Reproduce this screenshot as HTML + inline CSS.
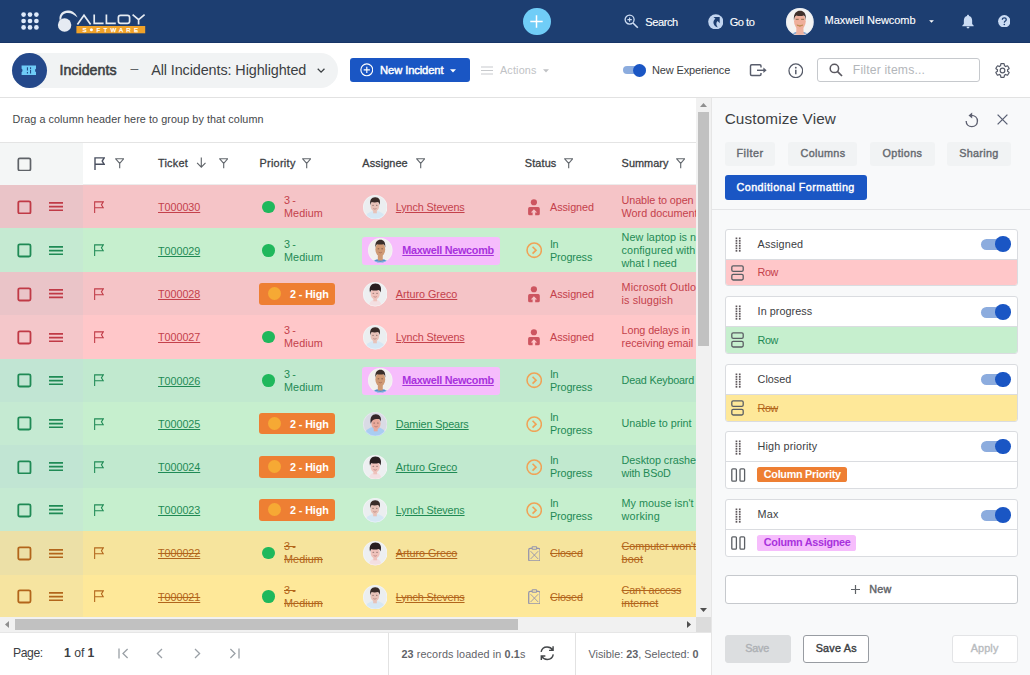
<!DOCTYPE html>
<html><head><meta charset="utf-8"><title>Incidents</title>
<style>
*{box-sizing:border-box;margin:0;padding:0}
html,body{width:1030px;height:675px;overflow:hidden;background:#fff;font-family:"Liberation Sans",sans-serif;font-size:10.8px;color:#3c4043}
.ab{position:absolute;display:block}
#nav{position:absolute;left:0;top:0;width:1030px;height:43px;background:#1d3e71;border-bottom:1.5px solid #173567}
#tbline{position:absolute;left:0;top:97px;width:1030px;height:1px;background:#e2e2e2}
#pill{position:absolute;left:12px;top:53px;width:326px;height:35px;border-radius:17.5px;background:#f1f3f4}
#pillc{position:absolute;left:12px;top:53px;width:34.6px;height:35px;border-radius:50%;background:#24488a}
#grp{position:absolute;left:0;top:98px;width:696px;height:44px;background:#fff}
#hdr{position:absolute;left:0;top:142px;width:696px;height:43px;background:#fff;border-top:1px solid #e4e4e4}
#hdr .fix{position:absolute;left:0;top:0;width:83px;height:43px;background:#f4f6f6}
#hdr::after{content:"";position:absolute;left:83px;top:41.4px;width:614px;height:1px;background:#ececec}
#grid{position:absolute;left:0;top:0;width:696px;height:617.3px;overflow:hidden}
.row{position:absolute;left:0;width:697px;height:43.4px;overflow:hidden}
.row .fix{position:absolute;left:0;top:0;width:83px;height:45px}
.cb{position:absolute;left:17.8px;width:14.4px;height:14.4px;border:1.8px solid #5f6368;border-radius:2.6px}
.dot{position:absolute;width:13px;height:13px;border-radius:50%}
.hi{position:absolute;left:259.2px;width:75.6px;height:21.8px;border-radius:3px;background:#ee7f33;color:#fff}
.mx{position:absolute;left:362.3px;width:137.8px;height:27.8px;border-radius:3px;background:#f6bdfc}
#vs{position:absolute;left:696px;top:98px;width:15px;height:519.3px;background:#f1f1f1}
#vs .th{position:absolute;left:2px;top:14.4px;width:11px;height:233.5px;background:#c1c1c1}
#hs{position:absolute;left:0;top:617.3px;width:696px;height:15.2px;background:#f1f1f1}
#hs .th{position:absolute;left:14.6px;top:2px;width:503.4px;height:11px;background:#c1c1c1}
#corner{position:absolute;left:696px;top:617.3px;width:15px;height:15.2px;background:#dcdcdc}
#pg{position:absolute;left:0;top:632px;width:711px;height:43px;background:#fff;border-top:1px solid #e6e6e6}
#pg b{font-weight:700}
#pn{position:absolute;left:711px;top:98px;width:319px;height:577px;background:#f8f9fa;border-left:1px solid #e6e6e6}
.card{position:absolute;left:12.6px;width:293.3px;height:57.4px;border:1px solid #dadce0;border-radius:3px;background:#fff;overflow:hidden}
.card .bot{position:absolute;left:0;top:29px;width:292px;height:29px;border-top:1px solid #dadce0}
.tg{position:absolute;width:23px;height:8px;border-radius:4px;background:#8cacde}
.tg i{position:absolute;right:0;top:-2px;width:12.9px;height:12.9px;border-radius:50%;background:#1a56c4;display:block}
.tg2{position:absolute;width:28px;height:11px;border-radius:5.5px;background:#8cacde}
.tg2 i{position:absolute;right:-1.2px;top:-2.6px;width:15.6px;height:15.6px;border-radius:50%;background:#1a56c4;display:block}
.chip{position:absolute;left:31.4px;top:4.6px;height:15.6px;border-radius:2.6px}
</style></head>
<body>
<div id="nav">
<svg class="ab" style="left:20.6px;top:11.7px" width="18" height="18" viewBox="0 0 18 18" fill="#dfeafa"><circle cx="2.6" cy="2.6" r="2.35"/><circle cx="9" cy="2.6" r="2.35"/><circle cx="15.4" cy="2.6" r="2.35"/><circle cx="2.6" cy="9" r="2.35"/><circle cx="9" cy="9" r="2.35"/><circle cx="15.4" cy="9" r="2.35"/><circle cx="2.6" cy="15.4" r="2.35"/><circle cx="9" cy="15.4" r="2.35"/><circle cx="15.4" cy="15.4" r="2.35"/></svg>
<svg class="ab" style="left:57px;top:9px" width="90" height="26" viewBox="0 0 90 26">
    <circle cx="7.6" cy="16" r="6.7" fill="#e6ebf2"/>
    <path d="M2.6 11 C1.6 4.6 6.6 0.8 12 1.6 C16.4 2.2 19 5 20.6 8.6 C17.4 5.4 14.4 4 11 3.9 C6.8 3.8 4.2 6.4 4.4 10.4 Z" fill="#e6ebf2"/>
    <rect x="19.4" y="17" width="68.8" height="7.3" fill="#f0a229"/>
    <g fill="none" stroke="#e6ebf2" stroke-width="1.7">
      <path d="M20.4 15.4 L27 6.2 L33.6 15.4"/>
      <path d="M37.2 5.4 V14.4 H46.6"/>
      <path d="M49.4 5.4 V14.4 H58.8"/>
      <rect x="61.4" y="6.3" width="11.2" height="8.1" rx="2.2"/>
      <path d="M75.6 5.6 L81.6 10.6 L87.6 5.6 M81.6 10.6 V15.4"/>
    </g>
    <text x="25.6" y="22.9" stroke="#fff" stroke-width="0.25" font-family="Liberation Sans, sans-serif" font-size="6" font-weight="400" fill="#fff" letter-spacing="3.2">S</text>
    <circle cx="34.4" cy="20.7" r="1.5" fill="#fff"/>
    <text x="39.6" y="22.9" font-family="Liberation Sans, sans-serif" font-size="6" font-weight="400" fill="#fff" letter-spacing="3.25" stroke="#fff" stroke-width="0.25">FTWARE</text>
  </svg>
<div class="ab" style="left:522.8px;top:7.6px;width:27.8px;height:27.8px;border-radius:50%;background:#70cdf7"></div>
<svg class="ab" style="left:530.2px;top:15px" width="13" height="13" viewBox="0 0 13 13"><path d="M6.5 0.3V12.7M0.3 6.5H12.7" stroke="#fff" stroke-width="1.5"/></svg>
<svg class="ab" style="left:624px;top:14.3px" width="15" height="15" viewBox="0 0 15 15"><circle cx="5.6" cy="5.6" r="4.5" fill="none" stroke="#cfdef4" stroke-width="1.3"/><path d="M9 9 L13.8 13.8" stroke="#cfdef4" stroke-width="1.6"/><path d="M5.6 3.4V7.8M3.4 5.6H7.8" stroke="#cfdef4" stroke-width="1.1"/></svg>
<span class="ab" style="left:645.3px;top:14.70px;font-size:11.1px;line-height:14px;white-space:nowrap;color:#fff;letter-spacing:-0.454px;-webkit-text-stroke:0.12px #fff;">Search</span>
<svg class="ab" style="left:707.6px;top:13.6px" width="15.6" height="15.6" viewBox="0 0 16 16"><circle cx="8" cy="8" r="7.8" fill="#c2d5f0"/><path d="M5.6 3 H12 V9.4 L9.9 7.3 C8 9 8.2 11.4 10 13.8 C5.4 12.6 4 7.8 7.6 5 Z" fill="#1d3e71"/></svg>
<span class="ab" style="left:729.7px;top:14.70px;font-size:11.1px;line-height:14px;white-space:nowrap;color:#fff;letter-spacing:-0.487px;-webkit-text-stroke:0.12px #fff;">Go to</span>
<svg class="ab" style="left:786.1px;top:7.5px" width="27.8" height="27.8" viewBox="0 0 28 28">
    <defs><clipPath id="cn"><circle cx="14" cy="14" r="14"/></clipPath></defs>
    <g clip-path="url(#cn)"><rect width="28" height="28" fill="#f4f3f2"/>
    <ellipse cx="14" cy="31" rx="11" ry="7.4" fill="#7ea6d4"/>
    <path d="M10.4 18 H17.6 V24 C17.6 26 19 26.6 20.4 27 L14 29 L7.6 27 C9 26.6 10.4 26 10.4 24 Z" fill="#eeb3a0"/>
    <ellipse cx="14" cy="13.6" rx="5.9" ry="7.7" fill="#efaf9b"/>
    <path d="M8 12.6 C7.2 5 11 2.7 14.1 2.8 C17.4 2.7 20.8 5 20 12.6 C19.7 9.4 19 8.2 17.8 7.6 C15.4 8.4 12.4 8.3 10.4 7.6 C9 8.4 8.4 9.8 8 12.6Z" fill="#3f302b"/>
    <path d="M9.8 11.4 H12.8 M15.2 11.4 H18.2" stroke="#6a5a3a" stroke-width="1" stroke-opacity="0.75"/>
    <path d="M11 17.2 Q14 19.8 17 17.2 Q14 18.4 11 17.2 Z" fill="#b98a4a" stroke="#b98a4a" stroke-width="0.9" stroke-opacity="0.8"/>
    </g><circle cx="14" cy="14" r="13.6" fill="none" stroke="#dfe8f5" stroke-opacity="0.7" stroke-width="0.7"/>
  </svg>
<span class="ab" style="left:824.6px;top:12.90px;font-size:11.0px;line-height:14px;white-space:nowrap;color:#fff;letter-spacing:-0.049px;-webkit-text-stroke:0.12px #fff;">Maxwell Newcomb</span>
<svg class="ab" style="left:929px;top:20.4px" width="5" height="3.2" viewBox="0 0 6 4"><path d="M0 0.2H6L3 3.4Z" fill="#fff"/></svg>
<svg class="ab" style="left:962px;top:13.8px" width="12" height="15.4" viewBox="0 0 13 16" fill="#cbdcf4"><path d="M6.5 0.6 C7.2 0.6 7.6 1.1 7.6 1.8 C9.8 2.4 11 4.2 11 6.6 V10.4 L12.6 12 V12.8 H0.4 V12 L2 10.4 V6.6 C2 4.2 3.2 2.4 5.4 1.8 C5.4 1.1 5.8 0.6 6.5 0.6Z"/><path d="M5 13.6 H8 C8 14.6 7.4 15.3 6.5 15.3 C5.6 15.3 5 14.6 5 13.6Z"/></svg>
<svg class="ab" style="left:997.6px;top:14.8px" width="12.6" height="12.6" viewBox="0 0 13 13"><circle cx="6.5" cy="6.5" r="6.4" fill="#cbdcf4"/><path d="M4.5 5 C4.5 3.6 5.4 2.9 6.5 2.9 C7.7 2.9 8.5 3.7 8.5 4.8 C8.5 6.2 6.6 6.3 6.5 7.9" fill="none" stroke="#1d3e71" stroke-width="1.3"/><circle cx="6.5" cy="9.8" r="0.85" fill="#1d3e71"/></svg>
</div>
<div id="tbline"></div><div id="pill"></div><div id="pillc"></div>
<svg class="ab" style="left:21.2px;top:64.6px" width="15.6" height="10.8" viewBox="0 0 16 11"><path d="M0.6 0.4 H15.4 V3.8 C14.2 4 14.2 7 15.4 7.2 V10.6 H0.6 V7.2 C1.8 7 1.8 4 0.6 3.8 Z" fill="#6ecbf7"/><path d="M6.6 2.2 V5.6 M6.6 7.2 V8.6 M9.8 2.2 V4.2 M9.8 5.2 V8.6" stroke="#24488a" stroke-width="1.1"/></svg>
<span class="ab" style="left:59.4px;top:60.90px;font-size:14.2px;line-height:18px;white-space:nowrap;color:#3c4043;letter-spacing:0.046px;-webkit-text-stroke:0.55px #3c4043;">Incidents</span>
<span class="ab" style="left:130.4px;top:59.30px;font-size:14px;line-height:18px;white-space:nowrap;color:#5f6368;">–</span>
<span class="ab" style="left:151.2px;top:60.90px;font-size:14.4px;line-height:18px;white-space:nowrap;color:#3c4043;letter-spacing:-0.096px;">All Incidents: Highlighted</span>
<svg class="ab" style="left:317px;top:68px" width="8.2" height="5.5" viewBox="0 0 9 6"><path d="M0.8 0.8 L4.5 4.6 L8.2 0.8" fill="none" stroke="#3c4043" stroke-width="1.4"/></svg>
<div class="ab" style="left:350.2px;top:57.6px;width:119.8px;height:24.9px;border-radius:3px;background:#1a56c4"></div>
<svg class="ab" style="left:359.8px;top:63.1px" width="13.6" height="13.6" viewBox="0 0 14 14"><circle cx="7" cy="7" r="6.1" fill="none" stroke="#fff" stroke-width="1.2"/><path d="M7 3.8V10.2M3.8 7H10.2" stroke="#fff" stroke-width="1.2"/></svg>
<span class="ab" style="left:380.1px;top:62.90px;font-size:11.2px;line-height:14px;white-space:nowrap;color:#fff;letter-spacing:-0.113px;-webkit-text-stroke:0.45px #fff;">New Incident</span>
<svg class="ab" style="left:450.2px;top:68.6px" width="6" height="4" viewBox="0 0 6 4"><path d="M0 0.2H6L3 3.4Z" fill="#fff"/></svg>
<svg class="ab" style="left:481.2px;top:65.6px" width="12" height="9" viewBox="0 0 12 9"><path d="M0 1H12M0 4.5H12M0 8H12" stroke="#c8cacd" stroke-width="1.2"/></svg>
<span class="ab" style="left:500px;top:62.90px;font-size:10.8px;line-height:14px;white-space:nowrap;color:#c0c2c5;letter-spacing:0.164px;">Actions</span>
<svg class="ab" style="left:542.6px;top:68.6px" width="6" height="4" viewBox="0 0 6 4"><path d="M0 0.2H6L3 3.4Z" fill="#c0c2c5"/></svg>
<div class="tg" style="left:622.9px;top:66px"><i></i></div>
<span class="ab" style="left:652px;top:62.90px;font-size:11.0px;line-height:14px;white-space:nowrap;color:#3c4043;letter-spacing:-0.138px;">New Experience</span>
<svg class="ab" style="left:748.8px;top:63px" width="19" height="14" viewBox="0 0 19 14"><path d="M12 4.5 V2.9 C12 2.2 11.5 1.7 10.8 1.7 H2.7 C2 1.7 1.5 2.2 1.5 2.9 V11.3 C1.5 12 2 12.5 2.7 12.5 H10.8 C11.5 12.5 12 12 12 11.3 V9.9" fill="none" stroke="#585d6c" stroke-width="1.45"/><path d="M8 7.3 H15" fill="none" stroke="#585d6c" stroke-width="1.45"/><path d="M14.4 4.5 L17.6 7.3 L14.4 10.1 Z" fill="#585d6c"/></svg>
<svg class="ab" style="left:787.7px;top:62.6px" width="15.6" height="15.6" viewBox="0 0 16 16"><circle cx="8" cy="8" r="7" fill="none" stroke="#555a68" stroke-width="1.3"/><path d="M8 7V11.6" stroke="#555a68" stroke-width="1.5"/><circle cx="8" cy="4.8" r="0.95" fill="#555a68"/></svg>
<div class="ab" style="left:817.2px;top:58.4px;width:163px;height:24px;border:1px solid #c6c9cd;border-radius:3px;background:#fff"></div>
<svg class="ab" style="left:829.2px;top:63px" width="14" height="14" viewBox="0 0 14 14"><circle cx="5.4" cy="5.4" r="4.2" fill="none" stroke="#5a5860" stroke-width="1.5"/><path d="M8.6 8.6 L13 13" stroke="#5a5860" stroke-width="1.7"/></svg>
<span class="ab" style="left:852.8px;top:62.30px;font-size:12.2px;line-height:16px;white-space:nowrap;color:#b3b6ba;letter-spacing:0.170px;">Filter items...</span>
<svg class="ab" style="left:994.2px;top:61.8px" width="17" height="17" viewBox="0 0 24 24"><path d="M19.14 12.94c.04-.3.06-.61.06-.94 0-.32-.02-.64-.07-.94l2.03-1.58a.49.49 0 0 0 .12-.61l-1.92-3.32a.488.488 0 0 0-.59-.22l-2.39.96c-.5-.38-1.03-.7-1.62-.94l-.36-2.54a.484.484 0 0 0-.48-.41h-3.84c-.24 0-.43.17-.47.41l-.36 2.54c-.59.24-1.13.57-1.62.94l-2.39-.96c-.22-.08-.47 0-.59.22L2.74 8.87c-.12.21-.08.47.12.61l2.03 1.58c-.05.3-.09.63-.09.94s.02.64.07.94l-2.03 1.58a.49.49 0 0 0-.12.61l1.92 3.32c.12.22.37.29.59.22l2.39-.96c.5.38 1.03.7 1.62.94l.36 2.54c.05.24.24.41.48.41h3.84c.24 0 .44-.17.47-.41l.36-2.54c.59-.24 1.13-.56 1.62-.94l2.39.96c.22.08.47 0 .59-.22l1.92-3.32c.12-.22.07-.47-.12-.61l-2.01-1.58z" fill="none" stroke="#555a68" stroke-width="1.7"/><circle cx="12" cy="12" r="3.3" fill="none" stroke="#555a68" stroke-width="1.7"/></svg>
<div id="grp"><span class="ab" style="left:12.6px;top:14.10px;font-size:10.8px;line-height:14px;white-space:nowrap;color:#44474a;letter-spacing:0.076px;">Drag a column header here to group by that column</span></div>
<div id="hdr"><div class="fix"></div><svg class="ab" style="left:17.4px;top:13.5px" width="14.8" height="14.8" viewBox="0 0 14.8 14.8"><rect x="1.3" y="1.3" width="12.2" height="12.2" rx="1.5" fill="none" stroke="#5f6368" stroke-width="1.7"/></svg>
<svg class="ab" style="left:94px;top:14.4px" width="11.4" height="13" viewBox="0 0 11 13"><path d="M0.8 13 V0.9 H10 L8 4.1 L10 7.3 H0.8" fill="none" stroke="#4a5060" stroke-width="1.4"/></svg>
<svg class="ab" style="left:115px;top:15.4px" width="9.4" height="10.4" viewBox="0 0 9.4 10.4"><path d="M0.7 0.8 H8.7 L4.7 5.4 Z M4.7 5.4 V10.2" fill="none" stroke="#63686e" stroke-width="1.15" stroke-linejoin="round"/></svg>
<span class="ab" style="left:158px;top:12.70px;font-size:10.9px;line-height:14px;white-space:nowrap;color:#3c4043;letter-spacing:0.207px;-webkit-text-stroke:0.3px #3c4043;">Ticket</span>
<svg class="ab" style="left:196px;top:14.2px" width="10.6" height="11.2" viewBox="0 0 11 12"><path d="M5.5 0.5 V10.6 M1 6.4 L5.5 10.9 L10 6.4" fill="none" stroke="#5f6368" stroke-width="1.2"/></svg>
<svg class="ab" style="left:219px;top:15.4px" width="9.4" height="10.4" viewBox="0 0 9.4 10.4"><path d="M0.7 0.8 H8.7 L4.7 5.4 Z M4.7 5.4 V10.2" fill="none" stroke="#63686e" stroke-width="1.15" stroke-linejoin="round"/></svg>
<span class="ab" style="left:259.4px;top:12.70px;font-size:10.9px;line-height:14px;white-space:nowrap;color:#3c4043;letter-spacing:0.298px;-webkit-text-stroke:0.3px #3c4043;">Priority</span>
<svg class="ab" style="left:302px;top:15.4px" width="9.4" height="10.4" viewBox="0 0 9.4 10.4"><path d="M0.7 0.8 H8.7 L4.7 5.4 Z M4.7 5.4 V10.2" fill="none" stroke="#63686e" stroke-width="1.15" stroke-linejoin="round"/></svg>
<span class="ab" style="left:362.3px;top:12.70px;font-size:10.9px;line-height:14px;white-space:nowrap;color:#3c4043;letter-spacing:0.080px;-webkit-text-stroke:0.3px #3c4043;">Assignee</span>
<svg class="ab" style="left:415.6px;top:15.4px" width="9.4" height="10.4" viewBox="0 0 9.4 10.4"><path d="M0.7 0.8 H8.7 L4.7 5.4 Z M4.7 5.4 V10.2" fill="none" stroke="#63686e" stroke-width="1.15" stroke-linejoin="round"/></svg>
<span class="ab" style="left:524.8px;top:12.70px;font-size:10.9px;line-height:14px;white-space:nowrap;color:#3c4043;letter-spacing:0.120px;-webkit-text-stroke:0.3px #3c4043;">Status</span>
<svg class="ab" style="left:564px;top:15.4px" width="9.4" height="10.4" viewBox="0 0 9.4 10.4"><path d="M0.7 0.8 H8.7 L4.7 5.4 Z M4.7 5.4 V10.2" fill="none" stroke="#63686e" stroke-width="1.15" stroke-linejoin="round"/></svg>
<span class="ab" style="left:621.6px;top:12.70px;font-size:10.9px;line-height:14px;white-space:nowrap;color:#3c4043;letter-spacing:0.027px;-webkit-text-stroke:0.3px #3c4043;">Summary</span>
<svg class="ab" style="left:675.6px;top:15.4px" width="9.4" height="10.4" viewBox="0 0 9.4 10.4"><path d="M0.7 0.8 H8.7 L4.7 5.4 Z M4.7 5.4 V10.2" fill="none" stroke="#63686e" stroke-width="1.15" stroke-linejoin="round"/></svg>
</div>
<div id="grid">
<div class="row" style="top:185.0px;height:43.5px;background:#f5c4c7;color:#c4414b"><div class="fix" style="background:#eac4c8"></div><svg class="ab" style="left:17.2px;top:14.70px" width="14.8" height="14.8" viewBox="0 0 14.8 14.8"><rect x="1.3" y="1.3" width="12.2" height="12.2" rx="1.5" fill="none" stroke="#c03a46" stroke-width="1.8"/></svg><svg class="ab" style="left:48.6px;top:17.20px" width="14.3" height="9.2" viewBox="0 0 14.3 9.2"><path d="M0 0.9H14.3M0 4.6H14.3M0 8.3H14.3" stroke="#c03a46" stroke-width="1.7"/></svg><svg class="ab" style="left:93.8px;top:15.90px" width="10.2" height="12.2" viewBox="0 0 11 13"><path d="M0.7 13 V0.9 H10 L8 4.1 L10 7.3 H0.7" fill="none" stroke="#c03a46" stroke-width="1.15"/></svg><span class="ab" style="left:158px;top:15.05px;font-size:10.8px;line-height:14px;white-space:nowrap;letter-spacing:-0.056px;text-decoration:underline;">T000030</span><div class="dot" style="left:262.3px;top:15.50px;width:12.6px;height:12.6px;background:#1fb85c"></div><span class="ab" style="left:284px;top:9.05px;font-size:10.8px;line-height:13.0px;white-space:nowrap;"><span style="letter-spacing:-0.352px">3 -</span><br><span style="letter-spacing:0.077px">Medium</span></span><svg class="ab" style="left:362.50px;top:10.00px" width="24.4" height="24.4" viewBox="0 0 24 24"><defs><clipPath id="ca0"><circle cx="12" cy="12" r="12"/></clipPath></defs><g clip-path="url(#ca0)"><rect width="24" height="24" fill="#ebeef0"/><ellipse cx="12" cy="24.5" rx="10.5" ry="9" fill="#d6e7f4"/><rect x="10" y="14" width="3.6" height="4" fill="#e8c2b8"/><ellipse cx="11.7" cy="10.6" rx="4.3" ry="5.4" fill="#e8c2b8"/><ellipse cx="9.899999999999999" cy="10.0" rx="0.85" ry="0.5" fill="#3a2a2a" fill-opacity="0.55"/><ellipse cx="13.5" cy="10.0" rx="0.85" ry="0.5" fill="#3a2a2a" fill-opacity="0.55"/><path d="M10.1 13.3 Q11.7 14.5 13.299999999999999 13.3" fill="none" stroke="#7a3a3a" stroke-opacity="0.5" stroke-width="0.7"/><path d="M7.2 10 C6.2 5 8.4 2.2 12 2.3 C15.8 2.2 17.6 5 16.4 9.8 C16 8 15.4 7.2 14.6 6.9 C12.6 7.6 9.8 7.4 8.6 7 C7.8 7.8 7.5 8.8 7.2 10Z" fill="#3a2c29"/></g><circle cx="12" cy="12" r="11.7" fill="none" stroke="#fff" stroke-opacity="0.55" stroke-width="0.6"/></svg><span class="ab" style="left:395.8px;top:15.05px;font-size:10.8px;line-height:14px;white-space:nowrap;letter-spacing:-0.129px;text-decoration:underline;">Lynch Stevens</span><svg class="ab" style="left:527.9px;top:13.80px" width="12" height="17" viewBox="0 0 12 17"><circle cx="5.9" cy="3.25" r="3.1" fill="#cd5560"/><path d="M1.7 8.1 H10.2 A1.6 1.6 0 0 1 11.8 9.7 V14.7 A1.6 1.6 0 0 1 10.2 16.3 H7.2 V13.5 H9.1 L5.9 10.2 L2.8 13.5 H4.6 V16.3 H1.7 A1.6 1.6 0 0 1 0.1 14.7 V9.7 A1.6 1.6 0 0 1 1.7 8.1 Z" fill="#cd5560"/></svg><span class="ab" style="left:550px;top:15.05px;font-size:10.8px;line-height:14px;white-space:nowrap;letter-spacing:-0.061px;">Assigned</span><span class="ab" style="left:621.6px;top:9.05px;font-size:10.8px;line-height:13.0px;white-space:nowrap;"><span style="letter-spacing:-0.097px">Unable to open</span><br><span style="letter-spacing:-0.003px">Word document</span></span></div>
<div class="row" style="top:228.2px;height:44.3px;background:#c6efce;color:#1f8a55"><div class="fix" style="background:#c5ead2"></div><svg class="ab" style="left:17.2px;top:15.10px" width="14.8" height="14.8" viewBox="0 0 14.8 14.8"><rect x="1.3" y="1.3" width="12.2" height="12.2" rx="1.5" fill="none" stroke="#1f8a55" stroke-width="1.8"/></svg><svg class="ab" style="left:48.6px;top:17.60px" width="14.3" height="9.2" viewBox="0 0 14.3 9.2"><path d="M0 0.9H14.3M0 4.6H14.3M0 8.3H14.3" stroke="#1f8a55" stroke-width="1.7"/></svg><svg class="ab" style="left:93.8px;top:16.30px" width="10.2" height="12.2" viewBox="0 0 11 13"><path d="M0.7 13 V0.9 H10 L8 4.1 L10 7.3 H0.7" fill="none" stroke="#1f8a55" stroke-width="1.15"/></svg><span class="ab" style="left:158px;top:15.45px;font-size:10.8px;line-height:14px;white-space:nowrap;letter-spacing:-0.056px;text-decoration:underline;">T000029</span><div class="dot" style="left:262.3px;top:15.90px;width:12.6px;height:12.6px;background:#1fb85c"></div><span class="ab" style="left:284px;top:9.45px;font-size:10.8px;line-height:13.0px;white-space:nowrap;"><span style="letter-spacing:-0.352px">3 -</span><br><span style="letter-spacing:0.077px">Medium</span></span><div class="mx" style="top:8.60px"></div><svg class="ab" style="left:368.30px;top:10.20px" width="24.6" height="24.6" viewBox="0 0 24 24"><defs><clipPath id="cm1"><circle cx="12" cy="12" r="12"/></clipPath></defs><g clip-path="url(#cm1)"><rect width="24" height="24" fill="#f1f0ef"/><ellipse cx="12" cy="27.2" rx="10" ry="6.8" fill="#4f8fcf"/><rect x="9.6" y="15" width="4.8" height="7" fill="#cf9a74"/><ellipse cx="12" cy="11.2" rx="4.8" ry="6.6" fill="#cf9a74"/><ellipse cx="10.2" cy="10.6" rx="0.85" ry="0.5" fill="#3a2a2a" fill-opacity="0.55"/><ellipse cx="13.8" cy="10.6" rx="0.85" ry="0.5" fill="#3a2a2a" fill-opacity="0.55"/><path d="M10.4 13.899999999999999 Q12 15.1 13.6 13.899999999999999" fill="none" stroke="#7a3a3a" stroke-opacity="0.5" stroke-width="0.7"/><path d="M7.2 9.6 C6.6 3.6 9.6 1.7 12.1 1.8 C14.8 1.7 17.4 3.6 16.8 9.6 C16.5 7.2 16 6.4 15 6 C13 6.6 10.6 6.5 9 6 C8 6.6 7.5 7.4 7.2 9.6Z" fill="#3a2f2a"/></g><circle cx="12" cy="12" r="11.7" fill="none" stroke="#fff" stroke-opacity="0.55" stroke-width="0.6"/></svg><span class="ab" style="left:402.3px;top:14.55px;font-size:10.8px;line-height:14px;white-space:nowrap;font-weight:700;color:#a832dc;letter-spacing:-0.259px;text-decoration:underline;">Maxwell Newcomb</span><svg class="ab" style="left:525.6px;top:14.30px" width="16.4" height="16.4" viewBox="0 0 16 16"><circle cx="8" cy="8" r="7" fill="none" stroke="#f0a256" stroke-width="1.5"/><path d="M6.4 4.6 L9.8 8 L6.4 11.4" fill="none" stroke="#f0a256" stroke-width="1.6"/></svg><span class="ab" style="left:550px;top:9.45px;font-size:10.8px;line-height:13.0px;white-space:nowrap;"><span style="letter-spacing:-0.607px">In</span><br><span style="letter-spacing:-0.131px">Progress</span></span><span class="ab" style="left:621.6px;top:2.95px;font-size:10.8px;line-height:13.0px;white-space:nowrap;"><span style="letter-spacing:0.047px">New laptop is n</span><br><span style="letter-spacing:0.083px">configured with</span><br><span style="letter-spacing:-0.064px">what I need</span></span></div>
<div class="row" style="top:272.2px;height:43.5px;background:#f5c4c7;color:#c4414b"><div class="fix" style="background:#eac4c8"></div><svg class="ab" style="left:17.2px;top:14.70px" width="14.8" height="14.8" viewBox="0 0 14.8 14.8"><rect x="1.3" y="1.3" width="12.2" height="12.2" rx="1.5" fill="none" stroke="#c03a46" stroke-width="1.8"/></svg><svg class="ab" style="left:48.6px;top:17.20px" width="14.3" height="9.2" viewBox="0 0 14.3 9.2"><path d="M0 0.9H14.3M0 4.6H14.3M0 8.3H14.3" stroke="#c03a46" stroke-width="1.7"/></svg><svg class="ab" style="left:93.8px;top:15.90px" width="10.2" height="12.2" viewBox="0 0 11 13"><path d="M0.7 13 V0.9 H10 L8 4.1 L10 7.3 H0.7" fill="none" stroke="#c03a46" stroke-width="1.15"/></svg><span class="ab" style="left:158px;top:15.05px;font-size:10.8px;line-height:14px;white-space:nowrap;letter-spacing:-0.056px;text-decoration:underline;">T000028</span><div class="hi" style="top:10.90px"><div class="dot" style="left:9.2px;top:4.4px;width:12.9px;height:12.9px;background:#f6a934"></div><span class="ab" style="left:30.8px;top:4.00px;font-size:10.8px;line-height:14px;white-space:nowrap;font-weight:700;letter-spacing:-0.114px;">2 - High</span></div><svg class="ab" style="left:362.50px;top:10.00px" width="24.4" height="24.4" viewBox="0 0 24 24"><defs><clipPath id="ca2"><circle cx="12" cy="12" r="12"/></clipPath></defs><g clip-path="url(#ca2)"><rect width="24" height="24" fill="#edeff1"/><ellipse cx="12" cy="25.5" rx="6.6" ry="8.5" fill="#f3dfe2"/><rect x="10.2" y="15" width="3.6" height="4" fill="#efc2bb"/><ellipse cx="12" cy="11.6" rx="4.5" ry="5.6" fill="#efc2bb"/><ellipse cx="10.2" cy="11.0" rx="0.85" ry="0.5" fill="#3a2a2a" fill-opacity="0.55"/><ellipse cx="13.8" cy="11.0" rx="0.85" ry="0.5" fill="#3a2a2a" fill-opacity="0.55"/><path d="M10.4 14.3 Q12 15.5 13.6 14.3" fill="none" stroke="#7a3a3a" stroke-opacity="0.5" stroke-width="0.7"/><path d="M6.9 10.6 C5.4 4 8.6 1.4 12.2 1.5 C16.2 1.4 19 4.4 17.2 10.4 C16.8 8.6 16.2 8 15.4 7.8 C13 8.6 9.6 8.4 8.4 7.8 C7.6 8.4 7.2 9.4 6.9 10.6Z" fill="#291f21"/></g><circle cx="12" cy="12" r="11.7" fill="none" stroke="#fff" stroke-opacity="0.55" stroke-width="0.6"/></svg><span class="ab" style="left:395.8px;top:15.05px;font-size:10.8px;line-height:14px;white-space:nowrap;letter-spacing:-0.029px;text-decoration:underline;">Arturo Greco</span><svg class="ab" style="left:527.9px;top:13.80px" width="12" height="17" viewBox="0 0 12 17"><circle cx="5.9" cy="3.25" r="3.1" fill="#cd5560"/><path d="M1.7 8.1 H10.2 A1.6 1.6 0 0 1 11.8 9.7 V14.7 A1.6 1.6 0 0 1 10.2 16.3 H7.2 V13.5 H9.1 L5.9 10.2 L2.8 13.5 H4.6 V16.3 H1.7 A1.6 1.6 0 0 1 0.1 14.7 V9.7 A1.6 1.6 0 0 1 1.7 8.1 Z" fill="#cd5560"/></svg><span class="ab" style="left:550px;top:15.05px;font-size:10.8px;line-height:14px;white-space:nowrap;letter-spacing:-0.061px;">Assigned</span><span class="ab" style="left:621.6px;top:9.05px;font-size:10.8px;line-height:13.0px;white-space:nowrap;"><span style="letter-spacing:0.134px">Microsoft Outlo</span><br><span style="letter-spacing:0.097px">is sluggish</span></span></div>
<div class="row" style="top:315.4px;height:43.5px;background:#ffc7c9;color:#c4414b"><div class="fix" style="background:#f4c7ca"></div><svg class="ab" style="left:17.2px;top:14.70px" width="14.8" height="14.8" viewBox="0 0 14.8 14.8"><rect x="1.3" y="1.3" width="12.2" height="12.2" rx="1.5" fill="none" stroke="#c03a46" stroke-width="1.8"/></svg><svg class="ab" style="left:48.6px;top:17.20px" width="14.3" height="9.2" viewBox="0 0 14.3 9.2"><path d="M0 0.9H14.3M0 4.6H14.3M0 8.3H14.3" stroke="#c03a46" stroke-width="1.7"/></svg><svg class="ab" style="left:93.8px;top:15.90px" width="10.2" height="12.2" viewBox="0 0 11 13"><path d="M0.7 13 V0.9 H10 L8 4.1 L10 7.3 H0.7" fill="none" stroke="#c03a46" stroke-width="1.15"/></svg><span class="ab" style="left:158px;top:15.05px;font-size:10.8px;line-height:14px;white-space:nowrap;letter-spacing:-0.056px;text-decoration:underline;">T000027</span><div class="dot" style="left:262.3px;top:15.50px;width:12.6px;height:12.6px;background:#1fb85c"></div><span class="ab" style="left:284px;top:9.05px;font-size:10.8px;line-height:13.0px;white-space:nowrap;"><span style="letter-spacing:-0.352px">3 -</span><br><span style="letter-spacing:0.077px">Medium</span></span><svg class="ab" style="left:362.50px;top:10.00px" width="24.4" height="24.4" viewBox="0 0 24 24"><defs><clipPath id="ca3"><circle cx="12" cy="12" r="12"/></clipPath></defs><g clip-path="url(#ca3)"><rect width="24" height="24" fill="#ebeef0"/><ellipse cx="12" cy="24.5" rx="10.5" ry="9" fill="#d6e7f4"/><rect x="10" y="14" width="3.6" height="4" fill="#e8c2b8"/><ellipse cx="11.7" cy="10.6" rx="4.3" ry="5.4" fill="#e8c2b8"/><ellipse cx="9.899999999999999" cy="10.0" rx="0.85" ry="0.5" fill="#3a2a2a" fill-opacity="0.55"/><ellipse cx="13.5" cy="10.0" rx="0.85" ry="0.5" fill="#3a2a2a" fill-opacity="0.55"/><path d="M10.1 13.3 Q11.7 14.5 13.299999999999999 13.3" fill="none" stroke="#7a3a3a" stroke-opacity="0.5" stroke-width="0.7"/><path d="M7.2 10 C6.2 5 8.4 2.2 12 2.3 C15.8 2.2 17.6 5 16.4 9.8 C16 8 15.4 7.2 14.6 6.9 C12.6 7.6 9.8 7.4 8.6 7 C7.8 7.8 7.5 8.8 7.2 10Z" fill="#3a2c29"/></g><circle cx="12" cy="12" r="11.7" fill="none" stroke="#fff" stroke-opacity="0.55" stroke-width="0.6"/></svg><span class="ab" style="left:395.8px;top:15.05px;font-size:10.8px;line-height:14px;white-space:nowrap;letter-spacing:-0.129px;text-decoration:underline;">Lynch Stevens</span><svg class="ab" style="left:527.9px;top:13.80px" width="12" height="17" viewBox="0 0 12 17"><circle cx="5.9" cy="3.25" r="3.1" fill="#cd5560"/><path d="M1.7 8.1 H10.2 A1.6 1.6 0 0 1 11.8 9.7 V14.7 A1.6 1.6 0 0 1 10.2 16.3 H7.2 V13.5 H9.1 L5.9 10.2 L2.8 13.5 H4.6 V16.3 H1.7 A1.6 1.6 0 0 1 0.1 14.7 V9.7 A1.6 1.6 0 0 1 1.7 8.1 Z" fill="#cd5560"/></svg><span class="ab" style="left:550px;top:15.05px;font-size:10.8px;line-height:14px;white-space:nowrap;letter-spacing:-0.061px;">Assigned</span><span class="ab" style="left:621.6px;top:9.05px;font-size:10.8px;line-height:13.0px;white-space:nowrap;"><span style="letter-spacing:-0.089px">Long delays in</span><br><span style="letter-spacing:-0.024px">receiving email</span></span></div>
<div class="row" style="top:358.6px;height:43.5px;background:#c1e9cf;color:#1f8a55"><div class="fix" style="background:#c1e5d3"></div><svg class="ab" style="left:17.2px;top:14.70px" width="14.8" height="14.8" viewBox="0 0 14.8 14.8"><rect x="1.3" y="1.3" width="12.2" height="12.2" rx="1.5" fill="none" stroke="#1f8a55" stroke-width="1.8"/></svg><svg class="ab" style="left:48.6px;top:17.20px" width="14.3" height="9.2" viewBox="0 0 14.3 9.2"><path d="M0 0.9H14.3M0 4.6H14.3M0 8.3H14.3" stroke="#1f8a55" stroke-width="1.7"/></svg><svg class="ab" style="left:93.8px;top:15.90px" width="10.2" height="12.2" viewBox="0 0 11 13"><path d="M0.7 13 V0.9 H10 L8 4.1 L10 7.3 H0.7" fill="none" stroke="#1f8a55" stroke-width="1.15"/></svg><span class="ab" style="left:158px;top:15.05px;font-size:10.8px;line-height:14px;white-space:nowrap;letter-spacing:-0.056px;text-decoration:underline;">T000026</span><div class="dot" style="left:262.3px;top:15.50px;width:12.6px;height:12.6px;background:#1fb85c"></div><span class="ab" style="left:284px;top:9.05px;font-size:10.8px;line-height:13.0px;white-space:nowrap;"><span style="letter-spacing:-0.352px">3 -</span><br><span style="letter-spacing:0.077px">Medium</span></span><div class="mx" style="top:8.20px"></div><svg class="ab" style="left:368.30px;top:9.80px" width="24.6" height="24.6" viewBox="0 0 24 24"><defs><clipPath id="cm4"><circle cx="12" cy="12" r="12"/></clipPath></defs><g clip-path="url(#cm4)"><rect width="24" height="24" fill="#f1f0ef"/><ellipse cx="12" cy="27.2" rx="10" ry="6.8" fill="#4f8fcf"/><rect x="9.6" y="15" width="4.8" height="7" fill="#cf9a74"/><ellipse cx="12" cy="11.2" rx="4.8" ry="6.6" fill="#cf9a74"/><ellipse cx="10.2" cy="10.6" rx="0.85" ry="0.5" fill="#3a2a2a" fill-opacity="0.55"/><ellipse cx="13.8" cy="10.6" rx="0.85" ry="0.5" fill="#3a2a2a" fill-opacity="0.55"/><path d="M10.4 13.899999999999999 Q12 15.1 13.6 13.899999999999999" fill="none" stroke="#7a3a3a" stroke-opacity="0.5" stroke-width="0.7"/><path d="M7.2 9.6 C6.6 3.6 9.6 1.7 12.1 1.8 C14.8 1.7 17.4 3.6 16.8 9.6 C16.5 7.2 16 6.4 15 6 C13 6.6 10.6 6.5 9 6 C8 6.6 7.5 7.4 7.2 9.6Z" fill="#3a2f2a"/></g><circle cx="12" cy="12" r="11.7" fill="none" stroke="#fff" stroke-opacity="0.55" stroke-width="0.6"/></svg><span class="ab" style="left:402.3px;top:14.15px;font-size:10.8px;line-height:14px;white-space:nowrap;font-weight:700;color:#a832dc;letter-spacing:-0.259px;text-decoration:underline;">Maxwell Newcomb</span><svg class="ab" style="left:525.6px;top:13.90px" width="16.4" height="16.4" viewBox="0 0 16 16"><circle cx="8" cy="8" r="7" fill="none" stroke="#f0a256" stroke-width="1.5"/><path d="M6.4 4.6 L9.8 8 L6.4 11.4" fill="none" stroke="#f0a256" stroke-width="1.6"/></svg><span class="ab" style="left:550px;top:9.05px;font-size:10.8px;line-height:13.0px;white-space:nowrap;"><span style="letter-spacing:-0.607px">In</span><br><span style="letter-spacing:-0.131px">Progress</span></span><span class="ab" style="left:621.6px;top:15.55px;font-size:10.8px;line-height:13.0px;white-space:nowrap;"><span style="letter-spacing:-0.196px">Dead Keyboard</span></span></div>
<div class="row" style="top:401.8px;height:43.5px;background:#c6efce;color:#1f8a55"><div class="fix" style="background:#c5ead2"></div><svg class="ab" style="left:17.2px;top:14.70px" width="14.8" height="14.8" viewBox="0 0 14.8 14.8"><rect x="1.3" y="1.3" width="12.2" height="12.2" rx="1.5" fill="none" stroke="#1f8a55" stroke-width="1.8"/></svg><svg class="ab" style="left:48.6px;top:17.20px" width="14.3" height="9.2" viewBox="0 0 14.3 9.2"><path d="M0 0.9H14.3M0 4.6H14.3M0 8.3H14.3" stroke="#1f8a55" stroke-width="1.7"/></svg><svg class="ab" style="left:93.8px;top:15.90px" width="10.2" height="12.2" viewBox="0 0 11 13"><path d="M0.7 13 V0.9 H10 L8 4.1 L10 7.3 H0.7" fill="none" stroke="#1f8a55" stroke-width="1.15"/></svg><span class="ab" style="left:158px;top:15.05px;font-size:10.8px;line-height:14px;white-space:nowrap;letter-spacing:-0.056px;text-decoration:underline;">T000025</span><div class="hi" style="top:10.90px"><div class="dot" style="left:9.2px;top:4.4px;width:12.9px;height:12.9px;background:#f6a934"></div><span class="ab" style="left:30.8px;top:4.00px;font-size:10.8px;line-height:14px;white-space:nowrap;font-weight:700;letter-spacing:-0.114px;">2 - High</span></div><svg class="ab" style="left:362.50px;top:10.00px" width="24.4" height="24.4" viewBox="0 0 24 24"><defs><clipPath id="ca5"><circle cx="12" cy="12" r="12"/></clipPath></defs><g clip-path="url(#ca5)"><rect width="24" height="24" fill="#d9dbe5"/><ellipse cx="12" cy="24.2" rx="11.5" ry="9.6" fill="#a9cdf2"/><rect x="10.6" y="15" width="3.8" height="4" fill="#e8a99b"/><ellipse cx="12.8" cy="11.4" rx="4.5" ry="5.8" fill="#e8a99b"/><ellipse cx="11.0" cy="10.8" rx="0.85" ry="0.5" fill="#3a2a2a" fill-opacity="0.55"/><ellipse cx="14.600000000000001" cy="10.8" rx="0.85" ry="0.5" fill="#3a2a2a" fill-opacity="0.55"/><path d="M11.200000000000001 14.100000000000001 Q12.8 15.3 14.4 14.100000000000001" fill="none" stroke="#7a3a3a" stroke-opacity="0.5" stroke-width="0.7"/><path d="M7.6 11.6 C6.4 5 9.4 2.2 12.6 2.3 C16 2.2 18.4 5 17.6 9.4 C17 7.8 16.4 7.2 15.4 7 C13.2 6.8 10.6 7.4 9.6 8.2 C8.6 9 8.2 10.2 7.6 11.6Z" fill="#35262a"/></g><circle cx="12" cy="12" r="11.7" fill="none" stroke="#fff" stroke-opacity="0.55" stroke-width="0.6"/></svg><span class="ab" style="left:395.8px;top:15.05px;font-size:10.8px;line-height:14px;white-space:nowrap;letter-spacing:-0.120px;text-decoration:underline;">Damien Spears</span><svg class="ab" style="left:525.6px;top:13.90px" width="16.4" height="16.4" viewBox="0 0 16 16"><circle cx="8" cy="8" r="7" fill="none" stroke="#f0a256" stroke-width="1.5"/><path d="M6.4 4.6 L9.8 8 L6.4 11.4" fill="none" stroke="#f0a256" stroke-width="1.6"/></svg><span class="ab" style="left:550px;top:9.05px;font-size:10.8px;line-height:13.0px;white-space:nowrap;"><span style="letter-spacing:-0.607px">In</span><br><span style="letter-spacing:-0.131px">Progress</span></span><span class="ab" style="left:621.6px;top:15.55px;font-size:10.8px;line-height:13.0px;white-space:nowrap;"><span style="letter-spacing:-0.017px">Unable to print</span></span></div>
<div class="row" style="top:445.0px;height:43.5px;background:#c1e9cf;color:#1f8a55"><div class="fix" style="background:#c1e5d3"></div><svg class="ab" style="left:17.2px;top:14.70px" width="14.8" height="14.8" viewBox="0 0 14.8 14.8"><rect x="1.3" y="1.3" width="12.2" height="12.2" rx="1.5" fill="none" stroke="#1f8a55" stroke-width="1.8"/></svg><svg class="ab" style="left:48.6px;top:17.20px" width="14.3" height="9.2" viewBox="0 0 14.3 9.2"><path d="M0 0.9H14.3M0 4.6H14.3M0 8.3H14.3" stroke="#1f8a55" stroke-width="1.7"/></svg><svg class="ab" style="left:93.8px;top:15.90px" width="10.2" height="12.2" viewBox="0 0 11 13"><path d="M0.7 13 V0.9 H10 L8 4.1 L10 7.3 H0.7" fill="none" stroke="#1f8a55" stroke-width="1.15"/></svg><span class="ab" style="left:158px;top:15.05px;font-size:10.8px;line-height:14px;white-space:nowrap;letter-spacing:-0.056px;text-decoration:underline;">T000024</span><div class="hi" style="top:10.90px"><div class="dot" style="left:9.2px;top:4.4px;width:12.9px;height:12.9px;background:#f6a934"></div><span class="ab" style="left:30.8px;top:4.00px;font-size:10.8px;line-height:14px;white-space:nowrap;font-weight:700;letter-spacing:-0.114px;">2 - High</span></div><svg class="ab" style="left:362.50px;top:10.00px" width="24.4" height="24.4" viewBox="0 0 24 24"><defs><clipPath id="ca6"><circle cx="12" cy="12" r="12"/></clipPath></defs><g clip-path="url(#ca6)"><rect width="24" height="24" fill="#edeff1"/><ellipse cx="12" cy="25.5" rx="6.6" ry="8.5" fill="#f3dfe2"/><rect x="10.2" y="15" width="3.6" height="4" fill="#efc2bb"/><ellipse cx="12" cy="11.6" rx="4.5" ry="5.6" fill="#efc2bb"/><ellipse cx="10.2" cy="11.0" rx="0.85" ry="0.5" fill="#3a2a2a" fill-opacity="0.55"/><ellipse cx="13.8" cy="11.0" rx="0.85" ry="0.5" fill="#3a2a2a" fill-opacity="0.55"/><path d="M10.4 14.3 Q12 15.5 13.6 14.3" fill="none" stroke="#7a3a3a" stroke-opacity="0.5" stroke-width="0.7"/><path d="M6.9 10.6 C5.4 4 8.6 1.4 12.2 1.5 C16.2 1.4 19 4.4 17.2 10.4 C16.8 8.6 16.2 8 15.4 7.8 C13 8.6 9.6 8.4 8.4 7.8 C7.6 8.4 7.2 9.4 6.9 10.6Z" fill="#291f21"/></g><circle cx="12" cy="12" r="11.7" fill="none" stroke="#fff" stroke-opacity="0.55" stroke-width="0.6"/></svg><span class="ab" style="left:395.8px;top:15.05px;font-size:10.8px;line-height:14px;white-space:nowrap;letter-spacing:-0.029px;text-decoration:underline;">Arturo Greco</span><svg class="ab" style="left:525.6px;top:13.90px" width="16.4" height="16.4" viewBox="0 0 16 16"><circle cx="8" cy="8" r="7" fill="none" stroke="#f0a256" stroke-width="1.5"/><path d="M6.4 4.6 L9.8 8 L6.4 11.4" fill="none" stroke="#f0a256" stroke-width="1.6"/></svg><span class="ab" style="left:550px;top:9.05px;font-size:10.8px;line-height:13.0px;white-space:nowrap;"><span style="letter-spacing:-0.607px">In</span><br><span style="letter-spacing:-0.131px">Progress</span></span><span class="ab" style="left:621.6px;top:9.05px;font-size:10.8px;line-height:13.0px;white-space:nowrap;"><span style="letter-spacing:-0.041px">Desktop crashe</span><br><span style="letter-spacing:-0.140px">with BSoD</span></span></div>
<div class="row" style="top:488.2px;height:43.5px;background:#c6efce;color:#1f8a55"><div class="fix" style="background:#c5ead2"></div><svg class="ab" style="left:17.2px;top:14.70px" width="14.8" height="14.8" viewBox="0 0 14.8 14.8"><rect x="1.3" y="1.3" width="12.2" height="12.2" rx="1.5" fill="none" stroke="#1f8a55" stroke-width="1.8"/></svg><svg class="ab" style="left:48.6px;top:17.20px" width="14.3" height="9.2" viewBox="0 0 14.3 9.2"><path d="M0 0.9H14.3M0 4.6H14.3M0 8.3H14.3" stroke="#1f8a55" stroke-width="1.7"/></svg><svg class="ab" style="left:93.8px;top:15.90px" width="10.2" height="12.2" viewBox="0 0 11 13"><path d="M0.7 13 V0.9 H10 L8 4.1 L10 7.3 H0.7" fill="none" stroke="#1f8a55" stroke-width="1.15"/></svg><span class="ab" style="left:158px;top:15.05px;font-size:10.8px;line-height:14px;white-space:nowrap;letter-spacing:-0.056px;text-decoration:underline;">T000023</span><div class="hi" style="top:10.90px"><div class="dot" style="left:9.2px;top:4.4px;width:12.9px;height:12.9px;background:#f6a934"></div><span class="ab" style="left:30.8px;top:4.00px;font-size:10.8px;line-height:14px;white-space:nowrap;font-weight:700;letter-spacing:-0.114px;">2 - High</span></div><svg class="ab" style="left:362.50px;top:10.00px" width="24.4" height="24.4" viewBox="0 0 24 24"><defs><clipPath id="ca7"><circle cx="12" cy="12" r="12"/></clipPath></defs><g clip-path="url(#ca7)"><rect width="24" height="24" fill="#ebeef0"/><ellipse cx="12" cy="24.5" rx="10.5" ry="9" fill="#d6e7f4"/><rect x="10" y="14" width="3.6" height="4" fill="#e8c2b8"/><ellipse cx="11.7" cy="10.6" rx="4.3" ry="5.4" fill="#e8c2b8"/><ellipse cx="9.899999999999999" cy="10.0" rx="0.85" ry="0.5" fill="#3a2a2a" fill-opacity="0.55"/><ellipse cx="13.5" cy="10.0" rx="0.85" ry="0.5" fill="#3a2a2a" fill-opacity="0.55"/><path d="M10.1 13.3 Q11.7 14.5 13.299999999999999 13.3" fill="none" stroke="#7a3a3a" stroke-opacity="0.5" stroke-width="0.7"/><path d="M7.2 10 C6.2 5 8.4 2.2 12 2.3 C15.8 2.2 17.6 5 16.4 9.8 C16 8 15.4 7.2 14.6 6.9 C12.6 7.6 9.8 7.4 8.6 7 C7.8 7.8 7.5 8.8 7.2 10Z" fill="#3a2c29"/></g><circle cx="12" cy="12" r="11.7" fill="none" stroke="#fff" stroke-opacity="0.55" stroke-width="0.6"/></svg><span class="ab" style="left:395.8px;top:15.05px;font-size:10.8px;line-height:14px;white-space:nowrap;letter-spacing:-0.129px;text-decoration:underline;">Lynch Stevens</span><svg class="ab" style="left:525.6px;top:13.90px" width="16.4" height="16.4" viewBox="0 0 16 16"><circle cx="8" cy="8" r="7" fill="none" stroke="#f0a256" stroke-width="1.5"/><path d="M6.4 4.6 L9.8 8 L6.4 11.4" fill="none" stroke="#f0a256" stroke-width="1.6"/></svg><span class="ab" style="left:550px;top:9.05px;font-size:10.8px;line-height:13.0px;white-space:nowrap;"><span style="letter-spacing:-0.607px">In</span><br><span style="letter-spacing:-0.131px">Progress</span></span><span class="ab" style="left:621.6px;top:9.05px;font-size:10.8px;line-height:13.0px;white-space:nowrap;"><span style="letter-spacing:0.024px">My mouse isn't</span><br><span style="letter-spacing:0.147px">working</span></span></div>
<div class="row" style="top:531.4px;height:43.5px;background:#f6e49d;color:#b2651b"><div class="fix" style="background:#ece0a7"></div><svg class="ab" style="left:17.2px;top:14.70px" width="14.8" height="14.8" viewBox="0 0 14.8 14.8"><rect x="1.3" y="1.3" width="12.2" height="12.2" rx="1.5" fill="none" stroke="#b2651b" stroke-width="1.8"/></svg><svg class="ab" style="left:48.6px;top:17.20px" width="14.3" height="9.2" viewBox="0 0 14.3 9.2"><path d="M0 0.9H14.3M0 4.6H14.3M0 8.3H14.3" stroke="#b2651b" stroke-width="1.7"/></svg><svg class="ab" style="left:93.8px;top:15.90px" width="10.2" height="12.2" viewBox="0 0 11 13"><path d="M0.7 13 V0.9 H10 L8 4.1 L10 7.3 H0.7" fill="none" stroke="#b2651b" stroke-width="1.15"/></svg><span class="ab" style="left:158px;top:15.05px;font-size:10.8px;line-height:14px;white-space:nowrap;letter-spacing:-0.056px;text-decoration:underline line-through;">T000022</span><div class="dot" style="left:262.3px;top:15.50px;width:12.6px;height:12.6px;background:#1fb85c"></div><span class="ab" style="left:284px;top:9.05px;font-size:10.8px;line-height:13.0px;white-space:nowrap;text-decoration:line-through;"><span style="letter-spacing:-0.352px">3 -</span><br><span style="letter-spacing:0.077px">Medium</span></span><svg class="ab" style="left:362.50px;top:10.00px" width="24.4" height="24.4" viewBox="0 0 24 24"><defs><clipPath id="ca8"><circle cx="12" cy="12" r="12"/></clipPath></defs><g clip-path="url(#ca8)"><rect width="24" height="24" fill="#edeff1"/><ellipse cx="12" cy="25.5" rx="6.6" ry="8.5" fill="#f3dfe2"/><rect x="10.2" y="15" width="3.6" height="4" fill="#efc2bb"/><ellipse cx="12" cy="11.6" rx="4.5" ry="5.6" fill="#efc2bb"/><ellipse cx="10.2" cy="11.0" rx="0.85" ry="0.5" fill="#3a2a2a" fill-opacity="0.55"/><ellipse cx="13.8" cy="11.0" rx="0.85" ry="0.5" fill="#3a2a2a" fill-opacity="0.55"/><path d="M10.4 14.3 Q12 15.5 13.6 14.3" fill="none" stroke="#7a3a3a" stroke-opacity="0.5" stroke-width="0.7"/><path d="M6.9 10.6 C5.4 4 8.6 1.4 12.2 1.5 C16.2 1.4 19 4.4 17.2 10.4 C16.8 8.6 16.2 8 15.4 7.8 C13 8.6 9.6 8.4 8.4 7.8 C7.6 8.4 7.2 9.4 6.9 10.6Z" fill="#291f21"/></g><circle cx="12" cy="12" r="11.7" fill="none" stroke="#fff" stroke-opacity="0.55" stroke-width="0.6"/></svg><span class="ab" style="left:395.8px;top:15.05px;font-size:10.8px;line-height:14px;white-space:nowrap;letter-spacing:-0.029px;text-decoration:underline line-through;">Arturo Greco</span><svg class="ab" style="left:527.6px;top:14.20px" width="12.8" height="15.6" viewBox="0 0 12.8 15.6"><rect x="0.7" y="2.4" width="11.4" height="12.5" rx="1.5" fill="none" stroke="#9494ad" stroke-width="1.25"/><rect x="4.1" y="0.7" width="4.6" height="2.6" rx="0.7" fill="#f3e4a3" stroke="#9494ad" stroke-width="1.1"/><path d="M2.6 5.2 L10.2 13 M10.2 5.2 L2.6 13" stroke="#9494ad" stroke-width="0.9"/></svg><span class="ab" style="left:550px;top:15.05px;font-size:10.8px;line-height:14px;white-space:nowrap;letter-spacing:-0.144px;text-decoration:line-through;">Closed</span><span class="ab" style="left:621.6px;top:9.05px;font-size:10.8px;line-height:13.0px;white-space:nowrap;text-decoration:line-through;"><span style="letter-spacing:-0.061px">Computer won't</span><br><span style="letter-spacing:0.093px">boot</span></span></div>
<div class="row" style="top:574.6px;height:43.5px;background:#fee899;color:#b2651b"><div class="fix" style="background:#f6e4a0"></div><svg class="ab" style="left:17.2px;top:14.70px" width="14.8" height="14.8" viewBox="0 0 14.8 14.8"><rect x="1.3" y="1.3" width="12.2" height="12.2" rx="1.5" fill="none" stroke="#b2651b" stroke-width="1.8"/></svg><svg class="ab" style="left:48.6px;top:17.20px" width="14.3" height="9.2" viewBox="0 0 14.3 9.2"><path d="M0 0.9H14.3M0 4.6H14.3M0 8.3H14.3" stroke="#b2651b" stroke-width="1.7"/></svg><svg class="ab" style="left:93.8px;top:15.90px" width="10.2" height="12.2" viewBox="0 0 11 13"><path d="M0.7 13 V0.9 H10 L8 4.1 L10 7.3 H0.7" fill="none" stroke="#b2651b" stroke-width="1.15"/></svg><span class="ab" style="left:158px;top:15.05px;font-size:10.8px;line-height:14px;white-space:nowrap;letter-spacing:-0.056px;text-decoration:underline line-through;">T000021</span><div class="dot" style="left:262.3px;top:15.50px;width:12.6px;height:12.6px;background:#1fb85c"></div><span class="ab" style="left:284px;top:9.05px;font-size:10.8px;line-height:13.0px;white-space:nowrap;text-decoration:line-through;"><span style="letter-spacing:-0.352px">3 -</span><br><span style="letter-spacing:0.077px">Medium</span></span><svg class="ab" style="left:362.50px;top:10.00px" width="24.4" height="24.4" viewBox="0 0 24 24"><defs><clipPath id="ca9"><circle cx="12" cy="12" r="12"/></clipPath></defs><g clip-path="url(#ca9)"><rect width="24" height="24" fill="#ebeef0"/><ellipse cx="12" cy="24.5" rx="10.5" ry="9" fill="#d6e7f4"/><rect x="10" y="14" width="3.6" height="4" fill="#e8c2b8"/><ellipse cx="11.7" cy="10.6" rx="4.3" ry="5.4" fill="#e8c2b8"/><ellipse cx="9.899999999999999" cy="10.0" rx="0.85" ry="0.5" fill="#3a2a2a" fill-opacity="0.55"/><ellipse cx="13.5" cy="10.0" rx="0.85" ry="0.5" fill="#3a2a2a" fill-opacity="0.55"/><path d="M10.1 13.3 Q11.7 14.5 13.299999999999999 13.3" fill="none" stroke="#7a3a3a" stroke-opacity="0.5" stroke-width="0.7"/><path d="M7.2 10 C6.2 5 8.4 2.2 12 2.3 C15.8 2.2 17.6 5 16.4 9.8 C16 8 15.4 7.2 14.6 6.9 C12.6 7.6 9.8 7.4 8.6 7 C7.8 7.8 7.5 8.8 7.2 10Z" fill="#3a2c29"/></g><circle cx="12" cy="12" r="11.7" fill="none" stroke="#fff" stroke-opacity="0.55" stroke-width="0.6"/></svg><span class="ab" style="left:395.8px;top:15.05px;font-size:10.8px;line-height:14px;white-space:nowrap;letter-spacing:-0.129px;text-decoration:underline line-through;">Lynch Stevens</span><svg class="ab" style="left:527.6px;top:14.20px" width="12.8" height="15.6" viewBox="0 0 12.8 15.6"><rect x="0.7" y="2.4" width="11.4" height="12.5" rx="1.5" fill="none" stroke="#9494ad" stroke-width="1.25"/><rect x="4.1" y="0.7" width="4.6" height="2.6" rx="0.7" fill="#f3e4a3" stroke="#9494ad" stroke-width="1.1"/><path d="M2.6 5.2 L10.2 13 M10.2 5.2 L2.6 13" stroke="#9494ad" stroke-width="0.9"/></svg><span class="ab" style="left:550px;top:15.05px;font-size:10.8px;line-height:14px;white-space:nowrap;letter-spacing:-0.144px;text-decoration:line-through;">Closed</span><span class="ab" style="left:621.6px;top:9.05px;font-size:10.8px;line-height:13.0px;white-space:nowrap;text-decoration:line-through;"><span style="letter-spacing:-0.154px">Can't access</span><br><span style="letter-spacing:0.097px">internet</span></span></div>
</div>
<div id="vs"><div class="th"></div>
  <svg class="ab" style="left:4px;top:5.4px" width="7" height="4" viewBox="0 0 7 4"><path d="M0 4L3.5 0L7 4Z" fill="#8f8f8f"/></svg>
  <svg class="ab" style="left:4px;top:509.6px" width="7" height="4" viewBox="0 0 7 4"><path d="M0 0L3.5 4L7 0Z" fill="#505050"/></svg>
</div>
<div id="hs"><div class="th"></div>
  <svg class="ab" style="left:5px;top:4px" width="4" height="7" viewBox="0 0 4 7"><path d="M4 0L0 3.5L4 7Z" fill="#8f8f8f"/></svg>
  <svg class="ab" style="left:687.2px;top:4px" width="4" height="7" viewBox="0 0 4 7"><path d="M0 0L4 3.5L0 7Z" fill="#505050"/></svg>
</div>
<div id="corner"></div>
<div id="pg">
<span class="ab" style="left:12.9px;top:11.90px;font-size:12.2px;line-height:16px;white-space:nowrap;color:#3c4043;letter-spacing:-0.371px;">Page:</span>
<span class="ab" style="left:64px;top:11.899999999999999px;font-size:12.2px;line-height:16px;white-space:nowrap;color:#3c4043;letter-spacing:-0.025px"><b>1</b> of <b>1</b></span>
<svg class="ab" style="left:117.6px;top:14.7px" width="11" height="11" viewBox="0 0 11 11"><path d="M1 0.5V10.5M9.6 1L5 5.5L9.6 10" fill="none" stroke="#9aa0a6" stroke-width="1.3"/></svg>
  <svg class="ab" style="left:156px;top:14.7px" width="7" height="11" viewBox="0 0 7 11"><path d="M6 1L1.4 5.5L6 10" fill="none" stroke="#9aa0a6" stroke-width="1.3"/></svg>
  <svg class="ab" style="left:193.6px;top:14.7px" width="7" height="11" viewBox="0 0 7 11"><path d="M1 1L5.6 5.5L1 10" fill="none" stroke="#9aa0a6" stroke-width="1.3"/></svg>
  <svg class="ab" style="left:228.6px;top:14.7px" width="11" height="11" viewBox="0 0 11 11"><path d="M10 0.5V10.5M1.4 1L6 5.5L1.4 10" fill="none" stroke="#9aa0a6" stroke-width="1.3"/></svg>
  <div class="ab" style="left:387.6px;top:0;width:1px;height:44px;background:#e2e2e2"></div>
<span class="ab" style="left:401.4px;top:13.899999999999999px;font-size:10.8px;line-height:14px;white-space:nowrap;color:#5f6368;letter-spacing:0.110px"><b>23</b> records loaded in <b>0.1</b>s</span>
<svg class="ab" style="left:538.8px;top:12.1px" width="16.4" height="16.4" viewBox="0 0 17 17"><path d="M2.2 7.2 C2.8 3.8 5.4 2 8.4 2 C11 2 13 3.2 14.2 5.2 M14.6 1.4 V5.6 H10.4 M14.8 9.8 C14.2 13.2 11.6 15 8.6 15 C6 15 4 13.8 2.8 11.8 M2.4 15.6 V11.4 H6.6" fill="none" stroke="#44474a" stroke-width="1.5"/></svg>
<div class="ab" style="left:574.6px;top:0;width:1px;height:44px;background:#e2e2e2"></div>
<span class="ab" style="left:588.5px;top:13.899999999999999px;font-size:10.8px;line-height:14px;white-space:nowrap;color:#5f6368;letter-spacing:0.015px">Visible: <b>23</b>, Selected: <b>0</b></span>
</div>
<div id="pn">
<span class="ab" style="left:12.7px;top:11.10px;font-size:15.3px;line-height:20px;white-space:nowrap;color:#3c4043;letter-spacing:0.138px;">Customize View</span>
<svg class="ab" style="left:253.2px;top:14px" width="13.6" height="15.6" viewBox="0 0 14 16"><path d="M6.4 3.4 C10.2 3.4 12.8 5.8 12.8 9.2 C12.8 12.6 10.4 15 7 15 C3.6 15 1.2 12.6 1.2 9.2" fill="none" stroke="#5d6070" stroke-width="1.4"/><path d="M7.4 0.4 L3.6 3.5 L7.4 6.6 Z" fill="#5d6070"/></svg>
<svg class="ab" style="left:285px;top:16.2px" width="11" height="11" viewBox="0 0 11 11"><path d="M0.6 0.6L10.4 10.4M10.4 0.6L0.6 10.4" stroke="#5a6074" stroke-width="1.3"/></svg>
<div class="ab" style="left:12.7px;top:44.0px;width:50.00px;height:23.60px;border-radius:3px;background:#f1f3f4"><span class="ab" style="left:11.8px;top:3.80px;font-size:10.8px;line-height:14px;white-space:nowrap;color:#666a70;letter-spacing:0.520px;-webkit-text-stroke:0.4px #666a70;">Filter</span></div>
<div class="ab" style="left:76.1px;top:44.0px;width:69.30px;height:23.60px;border-radius:3px;background:#f1f3f4"><span class="ab" style="left:12.5px;top:3.80px;font-size:10.8px;line-height:14px;white-space:nowrap;color:#666a70;letter-spacing:0.314px;-webkit-text-stroke:0.4px #666a70;">Columns</span></div>
<div class="ab" style="left:158.2px;top:44.0px;width:64.70px;height:23.60px;border-radius:3px;background:#f1f3f4"><span class="ab" style="left:12.4px;top:3.80px;font-size:10.8px;line-height:14px;white-space:nowrap;color:#666a70;letter-spacing:0.363px;-webkit-text-stroke:0.4px #666a70;">Options</span></div>
<div class="ab" style="left:234.8px;top:44.0px;width:64.10px;height:23.60px;border-radius:3px;background:#f1f3f4"><span class="ab" style="left:12.4px;top:3.80px;font-size:10.8px;line-height:14px;white-space:nowrap;color:#666a70;letter-spacing:0.312px;-webkit-text-stroke:0.4px #666a70;">Sharing</span></div>
<div class="ab" style="left:12.7px;top:77.1px;width:142.00px;height:24.70px;border-radius:3px;background:#1a56c4"><span class="ab" style="left:11.8px;top:5.35px;font-size:10.8px;line-height:14px;white-space:nowrap;color:#fff;letter-spacing:0.440px;-webkit-text-stroke:0.4px #fff;">Conditional Formatting</span></div>
<div class="ab" style="left:0;top:111.0px;width:320px;height:1px;background:#e4e5e7"></div>
<div class="card" style="top:130.6px"><svg class="ab" style="left:9.3px;top:7.6px" width="6.4" height="15.4" viewBox="0 0 6.4 15.4" fill="#5f585c"><rect x="0.6" y="0.5" width="1.7" height="1.7"/><rect x="0.6" y="3.0" width="1.7" height="1.7"/><rect x="0.6" y="5.5" width="1.7" height="1.7"/><rect x="0.6" y="8.0" width="1.7" height="1.7"/><rect x="0.6" y="10.5" width="1.7" height="1.7"/><rect x="0.6" y="13.0" width="1.7" height="1.7"/><rect x="3.9" y="0.5" width="1.7" height="1.7"/><rect x="3.9" y="3.0" width="1.7" height="1.7"/><rect x="3.9" y="5.5" width="1.7" height="1.7"/><rect x="3.9" y="8.0" width="1.7" height="1.7"/><rect x="3.9" y="10.5" width="1.7" height="1.7"/><rect x="3.9" y="13.0" width="1.7" height="1.7"/></svg><span class="ab" style="left:32.0px;top:7.00px;font-size:10.8px;line-height:14px;white-space:nowrap;color:#3c4043;letter-spacing:0.153px;">Assigned</span><div class="tg2" style="left:255.8px;top:9.2px"><i></i></div><div class="bot" style="background:#ffc7c9"><svg class="ab" style="left:5.9px;top:5px" width="13" height="16" viewBox="0 0 13 16"><rect x="0.8" y="0.8" width="11.4" height="5.6" rx="1.4" fill="none" stroke="#5b5f64" stroke-width="1.3"/><rect x="0.8" y="9.4" width="11.4" height="5.6" rx="1.4" fill="none" stroke="#5b5f64" stroke-width="1.3"/></svg><span class="ab" style="left:32.0px;top:5.60px;font-size:10.8px;line-height:14px;white-space:nowrap;color:#c4414b;letter-spacing:-0.403px;">Row</span></div></div>
<div class="card" style="top:198.4px"><svg class="ab" style="left:9.3px;top:7.6px" width="6.4" height="15.4" viewBox="0 0 6.4 15.4" fill="#5f585c"><rect x="0.6" y="0.5" width="1.7" height="1.7"/><rect x="0.6" y="3.0" width="1.7" height="1.7"/><rect x="0.6" y="5.5" width="1.7" height="1.7"/><rect x="0.6" y="8.0" width="1.7" height="1.7"/><rect x="0.6" y="10.5" width="1.7" height="1.7"/><rect x="0.6" y="13.0" width="1.7" height="1.7"/><rect x="3.9" y="0.5" width="1.7" height="1.7"/><rect x="3.9" y="3.0" width="1.7" height="1.7"/><rect x="3.9" y="5.5" width="1.7" height="1.7"/><rect x="3.9" y="8.0" width="1.7" height="1.7"/><rect x="3.9" y="10.5" width="1.7" height="1.7"/><rect x="3.9" y="13.0" width="1.7" height="1.7"/></svg><span class="ab" style="left:32.0px;top:7.00px;font-size:10.8px;line-height:14px;white-space:nowrap;color:#3c4043;letter-spacing:0.047px;">In progress</span><div class="tg2" style="left:255.8px;top:9.2px"><i></i></div><div class="bot" style="background:#c6efce"><svg class="ab" style="left:5.9px;top:5px" width="13" height="16" viewBox="0 0 13 16"><rect x="0.8" y="0.8" width="11.4" height="5.6" rx="1.4" fill="none" stroke="#5b5f64" stroke-width="1.3"/><rect x="0.8" y="9.4" width="11.4" height="5.6" rx="1.4" fill="none" stroke="#5b5f64" stroke-width="1.3"/></svg><span class="ab" style="left:32.0px;top:5.60px;font-size:10.8px;line-height:14px;white-space:nowrap;color:#1f8a55;letter-spacing:-0.403px;">Row</span></div></div>
<div class="card" style="top:266.2px"><svg class="ab" style="left:9.3px;top:7.6px" width="6.4" height="15.4" viewBox="0 0 6.4 15.4" fill="#5f585c"><rect x="0.6" y="0.5" width="1.7" height="1.7"/><rect x="0.6" y="3.0" width="1.7" height="1.7"/><rect x="0.6" y="5.5" width="1.7" height="1.7"/><rect x="0.6" y="8.0" width="1.7" height="1.7"/><rect x="0.6" y="10.5" width="1.7" height="1.7"/><rect x="0.6" y="13.0" width="1.7" height="1.7"/><rect x="3.9" y="0.5" width="1.7" height="1.7"/><rect x="3.9" y="3.0" width="1.7" height="1.7"/><rect x="3.9" y="5.5" width="1.7" height="1.7"/><rect x="3.9" y="8.0" width="1.7" height="1.7"/><rect x="3.9" y="10.5" width="1.7" height="1.7"/><rect x="3.9" y="13.0" width="1.7" height="1.7"/></svg><span class="ab" style="left:32.0px;top:7.00px;font-size:10.8px;line-height:14px;white-space:nowrap;color:#3c4043;letter-spacing:-0.004px;">Closed</span><div class="tg2" style="left:255.8px;top:9.2px"><i></i></div><div class="bot" style="background:#fee899"><svg class="ab" style="left:5.9px;top:5px" width="13" height="16" viewBox="0 0 13 16"><rect x="0.8" y="0.8" width="11.4" height="5.6" rx="1.4" fill="none" stroke="#5b5f64" stroke-width="1.3"/><rect x="0.8" y="9.4" width="11.4" height="5.6" rx="1.4" fill="none" stroke="#5b5f64" stroke-width="1.3"/></svg><span class="ab" style="left:32.0px;top:5.60px;font-size:10.8px;line-height:14px;white-space:nowrap;color:#b2651b;letter-spacing:-0.403px;text-decoration:line-through;">Row</span></div></div>
<div class="card" style="top:333.3px"><svg class="ab" style="left:9.3px;top:7.6px" width="6.4" height="15.4" viewBox="0 0 6.4 15.4" fill="#5f585c"><rect x="0.6" y="0.5" width="1.7" height="1.7"/><rect x="0.6" y="3.0" width="1.7" height="1.7"/><rect x="0.6" y="5.5" width="1.7" height="1.7"/><rect x="0.6" y="8.0" width="1.7" height="1.7"/><rect x="0.6" y="10.5" width="1.7" height="1.7"/><rect x="0.6" y="13.0" width="1.7" height="1.7"/><rect x="3.9" y="0.5" width="1.7" height="1.7"/><rect x="3.9" y="3.0" width="1.7" height="1.7"/><rect x="3.9" y="5.5" width="1.7" height="1.7"/><rect x="3.9" y="8.0" width="1.7" height="1.7"/><rect x="3.9" y="10.5" width="1.7" height="1.7"/><rect x="3.9" y="13.0" width="1.7" height="1.7"/></svg><span class="ab" style="left:32.0px;top:7.00px;font-size:10.8px;line-height:14px;white-space:nowrap;color:#3c4043;letter-spacing:0.165px;">High priority</span><div class="tg2" style="left:255.8px;top:9.2px"><i></i></div><div class="bot"><svg class="ab" style="left:5.5px;top:5.6px" width="15" height="14" viewBox="0 0 15 14"><rect x="0.8" y="0.8" width="4.6" height="12.4" rx="1" fill="none" stroke="#5b5f64" stroke-width="1.3"/><rect x="9" y="0.8" width="4.6" height="12.4" rx="1" fill="none" stroke="#5b5f64" stroke-width="1.3"/></svg><div class="chip" style="background:#ee7f33;width:89.8px"><span class="ab" style="left:6.8px;top:0.50px;font-size:10.8px;line-height:14px;white-space:nowrap;font-weight:700;color:#fff;letter-spacing:-0.272px;">Column Priority</span></div></div></div>
<div class="card" style="top:401.4px"><svg class="ab" style="left:9.3px;top:7.6px" width="6.4" height="15.4" viewBox="0 0 6.4 15.4" fill="#5f585c"><rect x="0.6" y="0.5" width="1.7" height="1.7"/><rect x="0.6" y="3.0" width="1.7" height="1.7"/><rect x="0.6" y="5.5" width="1.7" height="1.7"/><rect x="0.6" y="8.0" width="1.7" height="1.7"/><rect x="0.6" y="10.5" width="1.7" height="1.7"/><rect x="0.6" y="13.0" width="1.7" height="1.7"/><rect x="3.9" y="0.5" width="1.7" height="1.7"/><rect x="3.9" y="3.0" width="1.7" height="1.7"/><rect x="3.9" y="5.5" width="1.7" height="1.7"/><rect x="3.9" y="8.0" width="1.7" height="1.7"/><rect x="3.9" y="10.5" width="1.7" height="1.7"/><rect x="3.9" y="13.0" width="1.7" height="1.7"/></svg><span class="ab" style="left:32.0px;top:7.00px;font-size:10.8px;line-height:14px;white-space:nowrap;color:#3c4043;letter-spacing:0.198px;">Max</span><div class="tg2" style="left:255.8px;top:9.2px"><i></i></div><div class="bot"><svg class="ab" style="left:5.5px;top:5.6px" width="15" height="14" viewBox="0 0 15 14"><rect x="0.8" y="0.8" width="4.6" height="12.4" rx="1" fill="none" stroke="#5b5f64" stroke-width="1.3"/><rect x="9" y="0.8" width="4.6" height="12.4" rx="1" fill="none" stroke="#5b5f64" stroke-width="1.3"/></svg><div class="chip" style="background:#f6bdfc;width:99.2px"><span class="ab" style="left:6.8px;top:0.50px;font-size:10.8px;line-height:14px;white-space:nowrap;font-weight:700;color:#a832dc;letter-spacing:-0.265px;">Column Assignee</span></div></div></div>
<div class="ab" style="left:12.7px;top:477.4px;width:293.4px;height:28.2px;border-radius:3px;background:#fff;border:1px solid #c6c9cd"><svg class="ab" style="left:125.4px;top:8.4px" width="9" height="9" viewBox="0 0 9 9"><path d="M4.5 0V9M0 4.5H9" stroke="#5f6368" stroke-width="1.2"/></svg><span class="ab" style="left:143.5px;top:5.60px;font-size:10.8px;line-height:14px;white-space:nowrap;color:#5f6368;letter-spacing:0.247px;-webkit-text-stroke:0.4px #5f6368;">New</span></div>
<div class="ab" style="left:12.7px;top:537.4px;width:66.00px;height:27.30px;border-radius:3px;background:#dcdee0;border:1px solid #dcdee0"><span class="ab" style="left:19.5px;top:4.65px;font-size:10.8px;line-height:14px;white-space:nowrap;color:#aeb1b5;letter-spacing:-0.206px;-webkit-text-stroke:0.4px #aeb1b5;">Save</span></div>
<div class="ab" style="left:90.6px;top:537.4px;width:66.60px;height:27.30px;border-radius:3px;background:#fff;border:1px solid #989ca2"><span class="ab" style="left:12.1px;top:4.65px;font-size:10.8px;line-height:14px;white-space:nowrap;color:#3c4043;letter-spacing:0.229px;-webkit-text-stroke:0.4px #3c4043;">Save As</span></div>
<div class="ab" style="left:239.6px;top:537.4px;width:66.00px;height:27.30px;border-radius:3px;background:#fff;border:1px solid #e3e4e6"><span class="ab" style="left:18.1px;top:4.65px;font-size:10.8px;line-height:14px;white-space:nowrap;color:#b9bcc0;letter-spacing:0.146px;-webkit-text-stroke:0.4px #b9bcc0;">Apply</span></div>
</div>
</body></html>
